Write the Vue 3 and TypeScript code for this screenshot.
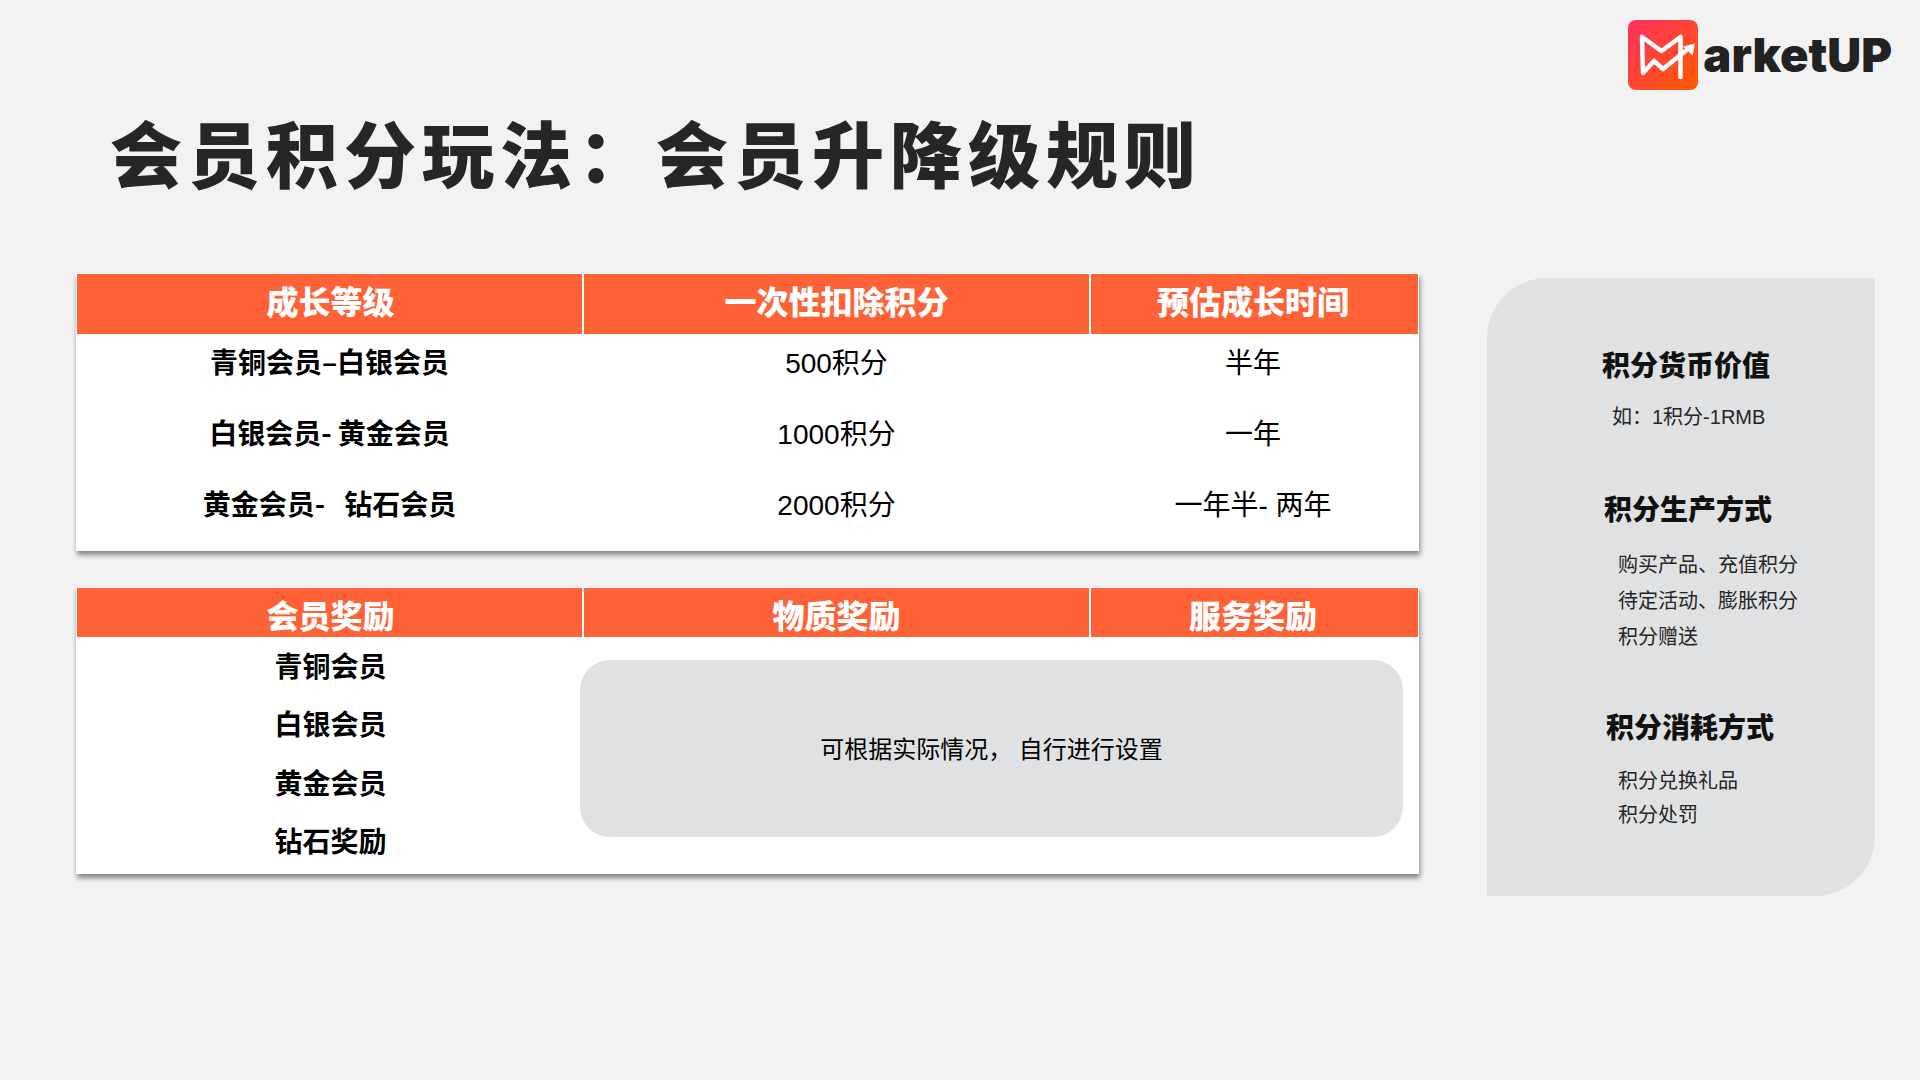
<script setup lang="ts">
const growthRows = [
  ['青铜会员–白银会员', '500积分', '半年'],
  ['白银会员- 黄金会员', '1000积分', '一年'],
  ['黄金会员-   钻石会员', '2000积分', '一年半- 两年'],
]
const tiers = ['青铜会员', '白银会员', '黄金会员', '钻石奖励']
</script>

<template>
  <div class="slide">
    <header class="brand">
      <svg class="mark" viewBox="0 0 70 70" width="70" height="70">
        <defs>
          <linearGradient id="lg" x1="0" y1="0" x2="1" y2="1">
            <stop offset="0" stop-color="#ff3163" />
            <stop offset="1" stop-color="#ff5a00" />
          </linearGradient>
        </defs>
        <rect width="70" height="70" rx="8" fill="url(#lg)" />
        <path d="M14 17 L33.500 31 L52.500 17 L52.500 57 M14 17 L15 53 L26 41 L35 49 L60 29" fill="none" stroke="#fff" stroke-width="4.500" stroke-linejoin="round" stroke-linecap="round" />
        <path d="M55 26.500 L67 23.500 L64.500 35.500 Z" fill="#fff" />
      </svg>
      <span class="wordmark">arketUP</span>
    </header>

    <h1 class="title">会员积分玩法：会员升降级规则</h1>

    <main class="content">
      <div class="tables">
        <section class="table growth">
          <div class="row head tall"><div>成长等级</div><div>一次性扣除积分</div><div>预估成长时间</div></div>
          <div class="growth-body">
            <div v-for="r in growthRows" :key="r[0]" class="row body-row">
              <div class="strong">{{ r[0] }}</div>
              <div>{{ r[1] }}</div>
              <div>{{ r[2] }}</div>
            </div>
          </div>
        </section>

        <section class="table rewards">
          <div class="row head short"><div>会员奖励</div><div>物质奖励</div><div>服务奖励</div></div>
          <div class="rewards-body">
            <div class="tiers">
              <div v-for="t in tiers" :key="t" class="strong tier">{{ t }}</div>
            </div>
            <div class="note">可根据实际情况， 自行进行设置</div>
          </div>
        </section>
      </div>

      <aside class="panel">
        <section class="block first">
          <h2>积分货币价值</h2>
          <p class="center">如：1积分-1RMB</p>
        </section>
        <section class="block second">
          <h2>积分生产方式</h2>
          <ul class="list wide">
            <li>购买产品、充值积分</li>
            <li>待定活动、膨胀积分</li>
            <li>积分赠送</li>
          </ul>
        </section>
        <section class="block third">
          <h2>积分消耗方式</h2>
          <ul class="list">
            <li>积分兑换礼品</li>
            <li>积分处罚</li>
          </ul>
        </section>
      </aside>
    </main>
  </div>
</template>

<style>
html, body { margin: 0; background: #f2f2f2; }
</style>

<style scoped>
.slide {
  width: 1920px;
  height: 1080px;
  box-sizing: border-box;
  background: #f2f2f2;
  padding: 20px 0 0 76px;
  overflow: hidden;
  font-family: "Liberation Sans", "Noto Sans CJK SC", sans-serif;
  color: #000;
}
.brand {
  display: flex;
  align-items: center;
  justify-content: flex-end;
  gap: 5px;
  height: 70px;
  padding-right: 28px;
}
.mark { display: block; flex: none; }
.wordmark {
  font-family: Inter, sans-serif;
  font-weight: 900;
  font-size: 47px;
  line-height: 70px;
  color: #222;
}
.title {
  margin: 18px 0 0 34px;
  height: 86px;
  font-family: "Noto Sans CJK SC", sans-serif;
  font-weight: 900;
  font-size: 72px;
  line-height: 86px;
  letter-spacing: 6px;
  color: #262626;
  white-space: nowrap;
}
.content {
  display: flex;
  align-items: flex-start;
  gap: 68px;
  margin-top: 79px;
}
.tables {
  width: 1343px;
  display: flex;
  flex-direction: column;
  gap: 36px;
}
.table {
  background: #fff;
  box-sizing: border-box;
  padding: 1px;
  box-shadow: 1px 4px 5px rgba(0, 0, 0, 0.45);
  text-align: center;
}
.growth { height: 278px; }
.rewards { height: 287px; }
.row {
  display: grid;
  grid-template-columns: 505px 505px 327px;
  gap: 2px;
  align-items: center;
}
.row > div:nth-child(3) { padding-right: 3px; box-sizing: border-box; }
.head {
  font-family: "Noto Sans CJK SC", sans-serif;
  font-weight: 900;
  font-size: 32px;
  color: #fff;
  align-items: stretch;
}
.head > div {
  background: #ff6236;
  display: flex;
  align-items: center;
  justify-content: center;
}
.head > div:first-child { padding-left: 2px; }
.tall { height: 60px; }
.tall > div { padding-bottom: 9px; box-sizing: border-box; }
.short { height: 49px; }
.short > div { padding-top: 3px; box-sizing: border-box; }
.growth-body {
  display: flex;
  flex-direction: column;
}
.body-row {
  height: 71px;
  box-sizing: border-box;
  padding-bottom: 18px;
  font-size: 28px;
  white-space: pre;
}
.strong {
  font-family: "Noto Sans CJK SC", sans-serif;
  font-weight: 700;
  font-size: 28px;
  white-space: pre;
}
.rewards-body {
  display: flex;
  align-items: flex-start;
}
.tiers {
  width: 505px;
  flex: none;
  display: flex;
  flex-direction: column;
  box-sizing: border-box;
  padding-left: 2px;
}
.tier {
  height: 58.300px;
  line-height: 56px;
}
.note {
  width: 823px;
  height: 177px;
  flex: none;
  margin: 23px 0 0 -2px;
  box-sizing: border-box;
  background: #e0e1e3;
  border-radius: 30px;
  padding-bottom: 2px;
  display: flex;
  align-items: center;
  justify-content: center;
  font-size: 24px;
  white-space: pre;
}
.panel {
  width: 388px;
  height: 618px;
  margin-top: 5px;
  flex: none;
  box-sizing: border-box;
  background: #e0e1e3;
  border-radius: 60px 0 60px 0;
  padding-top: 67px;
  color: #262626;
}
.block h2 {
  margin: 0;
  font-family: "Noto Sans CJK SC", sans-serif;
  font-weight: 900;
  font-size: 28px;
  line-height: 38px;
  color: #111;
}
.block p {
  margin: 20px 0 0;
  font-size: 20px;
  line-height: 28px;
}
.first { padding-left: 115px; }
.first p { padding-left: 10px; }
.second { padding-left: 117px; margin-top: 58px; }
.third { padding-left: 119px; margin-top: 52px; }
.list {
  list-style: none;
  margin: 20px 0 0;
  padding: 0 0 0 14px;
  font-size: 20px;
  line-height: 34px;
}
.third .list { padding-left: 12px; margin-top: 19px; }
.list.wide { line-height: 36px; }
</style>
